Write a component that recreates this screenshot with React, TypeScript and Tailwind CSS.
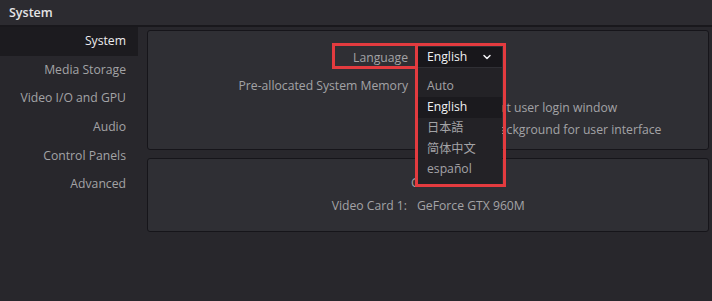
import React from 'react';
import { ChevronDown } from 'lucide-react';

const navItems = ['System', 'Media Storage', 'Video I/O and GPU', 'Audio', 'Control Panels', 'Advanced'];
const languages = ['Auto', 'English', '日本語', '简体中文', 'español'];

const font = { fontFamily: '"Open Sans", "Noto Sans CJK SC", sans-serif' };

export default function App() {
  return (
    <div className="w-[712px] h-[301px] overflow-hidden bg-[#28272c] text-[12.2px] text-[#a3a3a6] flex flex-col" style={font}>
      <header className="h-[27px] shrink-0 bg-[#2c2b30] border-b-2 border-[#19181c] flex items-center px-[9px] pt-[1px]">
        <span className="text-[12.5px] font-semibold text-[#e4e4e6]">System</span>
      </header>

      <div className="relative flex flex-1">
        <nav className="w-[138px] shrink-0 flex flex-col">
          {navItems.map((item, i) => (
            <div
              key={item}
              className={`h-[28.6px] flex items-center justify-end pr-[12px] ${i === 0 ? 'bg-[#1c1b1f] text-[#ececee]' : ''}`}
            >
              {item}
            </div>
          ))}
        </nav>

        <main className="flex-1 pl-[9px] pr-[3px] pt-[3px] flex flex-col gap-[8px]">
          <section className="h-[120px] rounded-[3px] border border-[#16151a] bg-[#2f2f34] pt-[17px] flex flex-col gap-[2px]">
            <div className="h-[20px] flex items-center gap-[10px]">
              <span className="w-[260px] text-right">Language</span>
              <span className="w-[84px]" />
            </div>
            <div className="h-[20px] mt-[6px] flex items-center gap-[10px]">
              <span className="w-[260px] text-right">Pre-allocated System Memory</span>
            </div>
            <div className="h-[20px] flex items-center pl-[298px] whitespace-nowrap">Use default user login window</div>
            <div className="h-[20px] flex items-center pl-[292px] whitespace-nowrap">Use gray background for user interface</div>
          </section>

          <section className="h-[74px] rounded-[3px] border border-[#16151a] bg-[#2f2f34] flex flex-col justify-center gap-[3px]">
            <div className="h-[20px] flex items-center pl-[263px] whitespace-nowrap">GPU</div>
            <div className="h-[20px] flex items-center gap-[10px] whitespace-nowrap">
              <span className="w-[259px] text-right">Video Card 1:</span>
              <span>GeForce GTX 960M</span>
            </div>
          </section>
        </main>

        {/* language selector button */}
        <div className="absolute left-[418px] top-[20px] w-[84px] h-[20px] bg-[#18171b] flex items-center pl-[9px] text-[#f2f2f4]">
          <span>English</span>
          <ChevronDown className="absolute left-[63px] w-[12px] h-[12px]" strokeWidth={3} />
        </div>

        {/* opened list */}
        <div className="absolute left-[418px] top-[41px] w-[84px] h-[116px] bg-[#232226] pt-[8px] flex flex-col">
          {languages.map((lang) => (
            <div
              key={lang}
              className={`h-[20.8px] flex items-center pl-[9px] ${lang === 'English' ? 'bg-[#1b1a1e] text-[#f2f2f4]' : ''}`}
            >
              {lang}
            </div>
          ))}
        </div>

        {/* annotation boxes */}
        <div className="absolute left-[332px] top-[16px] w-[86px] h-[26px] border-[3px] border-[#e33b3f]" />
        <div className="absolute left-[415px] top-[16px] w-[91px] h-[144px] border-[3px] border-[#e33b3f]" />
      </div>
    </div>
  );
}
